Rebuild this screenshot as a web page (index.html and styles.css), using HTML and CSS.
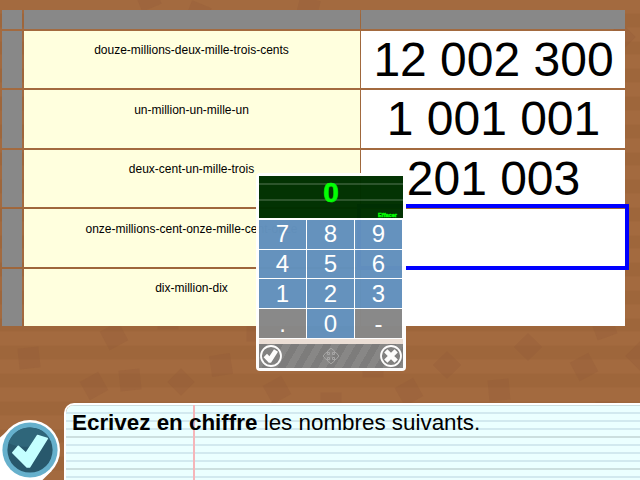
FILE: index.html
```
<!DOCTYPE html>
<html lang="fr">
<head>
<meta charset="utf-8">
<title>Ecrivez en chiffre</title>
<link rel="stylesheet" href="styles.css">
</head>
<body>
<svg class="confetti" width="640" height="480" aria-hidden="true">
  <defs><rect id="sq" x="-10.5" y="-10.5" width="21" height="21"/></defs>
  <g fill="#8f5836" fill-opacity=".25">
    <use href="#sq" transform="translate(114 336) rotate(-28)"/>
    <use href="#sq" transform="translate(29 358) rotate(-6)"/>
    <use href="#sq" transform="translate(94 386) rotate(-29)"/>
    <use href="#sq" transform="translate(130 380) rotate(-6)"/>
    <use href="#sq" transform="translate(181 382) rotate(45) scale(.93)"/>
    <use href="#sq" transform="translate(168 319)"/>
    <use href="#sq" transform="translate(221 365) rotate(-9)"/>
    <use href="#sq" transform="translate(257 331)"/>
    <use href="#sq" transform="translate(277 390) rotate(-29)"/>
    <use href="#sq" transform="translate(331 403)"/>
    <use href="#sq" transform="translate(373 367)"/>
    <use href="#sq" transform="translate(409 392) rotate(-29)"/>
    <use href="#sq" transform="translate(447 365) rotate(45) scale(.95)"/>
    <use href="#sq" transform="translate(499 390) rotate(-5)"/>
    <use href="#sq" transform="translate(528 347) rotate(45) scale(.95)"/>
    <use href="#sq" transform="translate(584 367) rotate(-28)"/>
    <use href="#sq" transform="translate(604 327) rotate(-20)"/>
    <use href="#sq" transform="translate(640 356) rotate(45)"/>
    <use href="#sq" transform="translate(606 412)"/>
    <use href="#sq" transform="translate(148 -2) rotate(-22)"/>
    <use href="#sq" transform="translate(198 14) rotate(22)"/>
    <use href="#sq" transform="translate(308 9) rotate(14)"/>
    <use href="#sq" transform="translate(621 37) rotate(45)"/>
  </g>
</svg>

<main class="grid">
  <div class="head"></div><div class="head"></div><div class="head"></div>
  <div class="head"></div><div class="words">douze-millions-deux-mille-trois-cents</div><div class="number">12 002 300</div>
  <div class="head"></div><div class="words low">un-million-un-mille-un</div><div class="number up">1 001 001</div>
  <div class="head"></div><div class="words">deux-cent-un-mille-trois</div><div class="number">201 003</div>
  <div class="head"></div><div class="words low">onze-millions-cent-onze-mille-cent-onze</div><div class="number selected"></div>
  <div class="head"></div><div class="words">dix-million-dix</div><div class="number"></div>
</main>

<section class="keypad">
  <div class="display"><span class="value">0</span><span class="clear">Effacer</span></div>
  <div class="keys">
    <div class="key">7</div><div class="key">8</div><div class="key">9</div>
    <div class="key">4</div><div class="key">5</div><div class="key">6</div>
    <div class="key">1</div><div class="key">2</div><div class="key">3</div>
    <div class="key off">.</div><div class="key">0</div><div class="key off">-</div>
  </div>
  <div class="strip"></div>
  <div class="bar">
    <svg width="24" height="24" viewBox="0 0 24 24"><circle cx="12" cy="12" r="10" fill="#828282" stroke="#fff" stroke-width="1.8"/><path d="M4.6 13.3 8 9.8l2.4 2.5 4.6-7 4 2.4-7 11H9.800z" fill="#fff"/></svg>
    <svg width="18" height="18" viewBox="-9 -9 18 18" fill="none" stroke="#a8a8a8" stroke-width="1">
      <defs><path id="arm" d="M-1.500-1.500V-3.500H-3.500V-5L0-7.800 3.500-5V-3.500H1.500V-1.500"/></defs>
      <use href="#arm"/><use href="#arm" transform="rotate(90)"/><use href="#arm" transform="rotate(180)"/><use href="#arm" transform="rotate(270)"/>
    </svg>
    <svg width="24" height="24" viewBox="0 0 24 24"><circle cx="12" cy="12" r="10" fill="#828282" stroke="#fff" stroke-width="1.8"/><path d="M6.800 6.800l10.400 10.400M17.200 6.800L6.800 17.200" stroke="#fff" stroke-width="4.6"/></svg>
  </div>
</section>

<footer class="footer">
  <svg class="validate" width="64" height="62" viewBox="0 418 64 62">
    <path d="M0 437.5 9.5 429 51.5 471 42.5 480H0z" fill="#fff"/>
    <circle cx="30" cy="450" r="30" fill="#fff"/>
    <circle cx="30" cy="450" r="27.6" fill="#66b0cc"/>
    <circle cx="30" cy="450" r="22.6" fill="#28586c"/>
    <path d="M8.5 443A22.6 22.6 0 0 1 50 439.5C43 440 39 445 30 446.5 20 447.5 14 446 8.5 443z" fill="#2f667a"/>
    <path d="M12.8 452.7 18.3 446.3 26 453.3 37.6 435.5 47.2 438.5 29.5 467 27 467z" fill="#c4ffff" stroke="#c4ffff" stroke-width="1.6" stroke-linejoin="round"/>
  </svg>
  <div class="paper"><p class="text"><b>Ecrivez en chiffre</b> les nombres suivants.</p></div>
</footer>
</body>
</html>
```
FILE: styles.css
```
* { box-sizing: border-box; }

body {
  margin: 0;
  width: 640px;
  height: 480px;
  overflow: hidden;
  position: relative;
  display: flex;
  flex-direction: column;
  font-family: "Liberation Sans", Arial, sans-serif;
  color: #000;
  background: repeating-linear-gradient(#a36a3f 0 14px, #9e663b 14px 27.7px) 0 -0.5px;
}

.confetti { position: absolute; left: 0; top: 0; }

.grid {
  position: relative;
  margin: 10px 0 0 2px;
  display: grid;
  width: 623px;
  grid-template-columns: 22px 337px 264px;
  grid-template-rows: 19px 57px 58px 57px 58px 57px;
  row-gap: 2px;
}

.head { background: #888; }
.head:nth-child(3n + 1) { margin-right: 2px; }
.head:nth-child(3n + 2) { margin-right: 1px; }

.words {
  margin-right: 1px;
  padding-top: 12px;
  padding-right: 1px;
  background: #ffffde;
  font-size: 12px;
  line-height: 14px;
  text-align: center;
}
.words.low { padding-top: 13px; }

.number {
  padding-left: 1px;
  background: #fff;
  font-size: 48px;
  line-height: 57px;
  text-align: center;
}
.number.up { line-height: 58px; }

.selected { position: relative; }
.selected::after {
  content: "";
  position: absolute;
  inset: -5px -4px -3px -4px;
  border: 4px solid #00f;
}

.keypad {
  position: absolute;
  left: 256px;
  top: 173px;
  width: 150px;
  height: 198px;
  padding: 3px;
  border-radius: 4px;
  background: #fff;
  opacity: 0.985;
}

.display {
  position: relative;
  height: 42px;
  background: linear-gradient(transparent 7px, #2a532a 7px 9px, transparent 9px 23px, #2a532a 23px 25px, transparent 25px) #003000;
  color: #0f0;
  font-weight: bold;
  text-align: center;
}
.value { font-size: 28px; line-height: 34px; -webkit-text-stroke: 0.6px #0f0; }
.clear {
  position: absolute;
  right: 6px;
  bottom: 0;
  font-size: 5.6px;
  line-height: 6px;
  -webkit-text-stroke: 0.4px #0f0;
}

.keys {
  margin-top: 2px;
  display: grid;
  grid-template-columns: repeat(3, 47px);
  grid-template-rows: 29px 28px 29px 29px;
  gap: 1px;
}
.key {
  background: #6391bd;
  color: #fff;
  font-size: 24px;
  line-height: 28px;
  text-align: center;
}
.key:nth-child(n + 7) { line-height: 30px; }
.key.off { background: #888; }

.strip { height: 5px; margin-top: 1px; background: #ede0d8; }

.bar {
  height: 24px;
  display: flex;
  align-items: center;
  justify-content: space-between;
  background: repeating-linear-gradient(120deg, #7d7d7d 0 7px, #888 7px 14px);
}

.footer {
  position: relative;
  margin-top: auto;
  height: 77px;
  display: flex;
  align-items: flex-end;
}
.validate { flex: none; }

.paper {
  flex: 1;
  height: 77px;
  border: 2px solid #fff;
  border-width: 2px 0 0 2px;
  border-radius: 10px 0 0 0;
  padding: 5px 0 0 6px;
  background:
    linear-gradient(90deg, transparent 127px, #f5b5b9 127px 129px, transparent 129px),
    repeating-linear-gradient(#ccdfdf 0 1px, transparent 1px 31px, #ccdfdf 31px 32px),
    repeating-linear-gradient(transparent 0 7px, #d2e9ef 7px 9px, transparent 9px 15px, #d2e9ef 15px 17px, transparent 17px 23px, #d2e9ef 23px 25px, transparent 25px 32px),
    #ebffff;
  background-clip: padding-box;
}
.text { margin: 0; font-size: 22.4px; line-height: 25px; }
```
